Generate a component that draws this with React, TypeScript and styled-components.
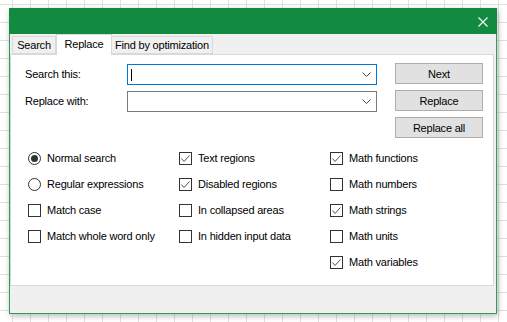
import React from "react";
import styled, { createGlobalStyle } from "styled-components";

const GlobalStyle = createGlobalStyle`
  html, body { margin: 0; padding: 0; }
  body {
    font-family: "Liberation Sans", Arial, sans-serif;
    font-size: 11px;
    color: #000;
  }
`;

const Page = styled.div`
  width: 507px;
  height: 322px;
  box-sizing: border-box;
  padding: 8px 0 0 9px;
  background-color: #fff;
  background-image: linear-gradient(to right, #e0e0e0 1px, transparent 1px),
    linear-gradient(to bottom, #e0e0e0 1px, transparent 1px);
  background-size: 18px 18px;
  background-position: 12px 4px;
  overflow: hidden;
`;

const Dialog = styled.div`
  width: 488px;
  height: 306px;
  box-sizing: border-box;
  border: 1px solid #2f9a56;
  background: #f0f0f0;
  display: flex;
  flex-direction: column;
  box-shadow: 1px 2px 6px rgba(0, 0, 0, 0.28);
`;

const TitleBar = styled.div`
  height: 25px;
  background: #128a3f;
  display: flex;
  align-items: center;
  justify-content: flex-end;
  padding-right: 9px;
  margin: -1px -1px 0 -1px;
  padding-top: 1px;
`;

const CloseIcon = () => (
  <svg width="10" height="10" viewBox="0 0 10 10">
    <path d="M0.5 0.5 L9.5 9.5 M9.5 0.5 L0.5 9.5" stroke="#fff" strokeWidth="1.1" />
  </svg>
);

const TabStrip = styled.div`
  display: flex;
  align-items: flex-start;
  height: 21px;
  margin-bottom: -1px;
  padding-left: 2px;
  position: relative;
  z-index: 1;
`;

const Tab = styled.div<{ $active?: boolean; $first?: boolean; $w: number }>`
  box-sizing: border-box;
  width: ${(p) => p.$w}px;
  height: ${(p) => (p.$active ? 21 : 18)}px;
  margin-top: ${(p) => (p.$active ? 0 : 2)}px;
  background: ${(p) => (p.$active ? "#fff" : "#f0f0f0")};
  border: 1px solid #d9d9d9;
  border-bottom: ${(p) => (p.$active ? "none" : "1px solid #d9d9d9")};
  border-left: ${(p) => (p.$first || p.$active ? "1px solid #d9d9d9" : "none")};
  display: flex;
  align-items: center;
  justify-content: center;
  padding-bottom: ${(p) => (p.$active ? 3 : 0)}px;
  letter-spacing: -0.2px;
  white-space: nowrap;
`;

const Panel = styled.div`
  flex: 1;
  margin-right: 2px;
  background: #fff;
  border: 1px solid #d9d9d9;
  padding: 8px 10px 0 14px;
  display: flex;
  flex-direction: column;
`;

const TopGrid = styled.div`
  display: grid;
  grid-template-columns: 102px 250px 18px 88px;
  grid-template-rows: 21px 21px 21px;
  row-gap: 6px;
  align-items: center;
`;

const Label = styled.div<{ $row: number }>`
  grid-column: 1;
  grid-row: ${(p) => p.$row};
  letter-spacing: -0.2px;
  white-space: nowrap;
`;

const Combo = styled.div<{ $focused?: boolean; $row: number }>`
  grid-column: 2;
  grid-row: ${(p) => p.$row};
  box-sizing: border-box;
  height: 21px;
  margin-top: 1px;
  align-self: start;
  background: #fff;
  border: 1px solid ${(p) => (p.$focused ? "#0078d7" : "#7a7a7a")};
  display: flex;
  align-items: center;
  padding: 0 5px 0 2px;
`;

const Caret = styled.div`
  width: 1px;
  height: 12px;
  background: #000;
  margin-left: 1px;
`;

const ComboSpacer = styled.div`
  flex: 1;
`;

const Chevron = () => (
  <svg width="9" height="5" viewBox="0 0 9 5">
    <path d="M0.5 0.5 L4.5 4.5 L8.5 0.5" fill="none" stroke="#444" strokeWidth="1" />
  </svg>
);

const Button = styled.div<{ $row: number }>`
  grid-column: 4;
  grid-row: ${(p) => p.$row};
  box-sizing: border-box;
  height: 21px;
  background: #e1e1e1;
  border: 1px solid #adadad;
  display: flex;
  align-items: center;
  justify-content: center;
  letter-spacing: -0.2px;
`;

const Options = styled.div`
  display: grid;
  grid-template-columns: 151px 151px auto;
  margin-top: 7px;
  padding-left: 3px;
`;

const OptionColumn = styled.div`
  display: flex;
  flex-direction: column;
`;

const OptionRow = styled.div`
  height: 26px;
  display: flex;
  align-items: center;
  gap: 6px;
  letter-spacing: -0.2px;
  white-space: nowrap;
`;

const Box = styled.div`
  box-sizing: border-box;
  width: 13px;
  height: 13px;
  border: 1px solid #333;
  background: #fff;
  display: flex;
  align-items: center;
  justify-content: center;
  flex: none;
`;

const Round = styled.div`
  box-sizing: border-box;
  width: 13px;
  height: 13px;
  border: 1px solid #333;
  border-radius: 50%;
  background: #fff;
  display: flex;
  align-items: center;
  justify-content: center;
  flex: none;
`;

const Dot = styled.div`
  width: 7px;
  height: 7px;
  border-radius: 50%;
  background: #333;
`;

const Footer = styled.div`
  height: 27px;
`;

const Check = () => (
  <svg width="11" height="11" viewBox="0 0 11 11">
    <path d="M1.5 5.5 L4 8.5 L9.5 2.5" fill="none" stroke="#555" strokeWidth="1" />
  </svg>
);

const CheckOpt = ({ label, checked }: { label: string; checked?: boolean }) => (
  <OptionRow>
    <Box>{checked && <Check />}</Box>
    <span>{label}</span>
  </OptionRow>
);

const RadioOpt = ({ label, checked }: { label: string; checked?: boolean }) => (
  <OptionRow>
    <Round>{checked && <Dot />}</Round>
    <span>{label}</span>
  </OptionRow>
);

export default function App() {
  return (
    <>
      <GlobalStyle />
      <Page>
        <Dialog>
          <TitleBar>
            <CloseIcon />
          </TitleBar>
          <TabStrip>
            <Tab $w={44} $first>Search</Tab>
            <Tab $w={56} $active>Replace</Tab>
            <Tab $w={101}>Find by optimization</Tab>
          </TabStrip>
          <Panel>
            <TopGrid>
              <Label $row={1}>Search this:</Label>
              <Combo $focused $row={1}>
                <Caret />
                <ComboSpacer />
                <Chevron />
              </Combo>
              <Button $row={1}>Next</Button>
              <Label $row={2}>Replace with:</Label>
              <Combo $row={2}>
                <ComboSpacer />
                <Chevron />
              </Combo>
              <Button $row={2}>Replace</Button>
              <Button $row={3}>Replace all</Button>
            </TopGrid>
            <Options>
              <OptionColumn>
                <RadioOpt label="Normal search" checked />
                <RadioOpt label="Regular expressions" />
                <CheckOpt label="Match case" />
                <CheckOpt label="Match whole word only" />
              </OptionColumn>
              <OptionColumn>
                <CheckOpt label="Text regions" checked />
                <CheckOpt label="Disabled regions" checked />
                <CheckOpt label="In collapsed areas" />
                <CheckOpt label="In hidden input data" />
              </OptionColumn>
              <OptionColumn>
                <CheckOpt label="Math functions" checked />
                <CheckOpt label="Math numbers" />
                <CheckOpt label="Math strings" checked />
                <CheckOpt label="Math units" />
                <CheckOpt label="Math variables" checked />
              </OptionColumn>
            </Options>
          </Panel>
          <Footer />
        </Dialog>
      </Page>
    </>
  );
}
